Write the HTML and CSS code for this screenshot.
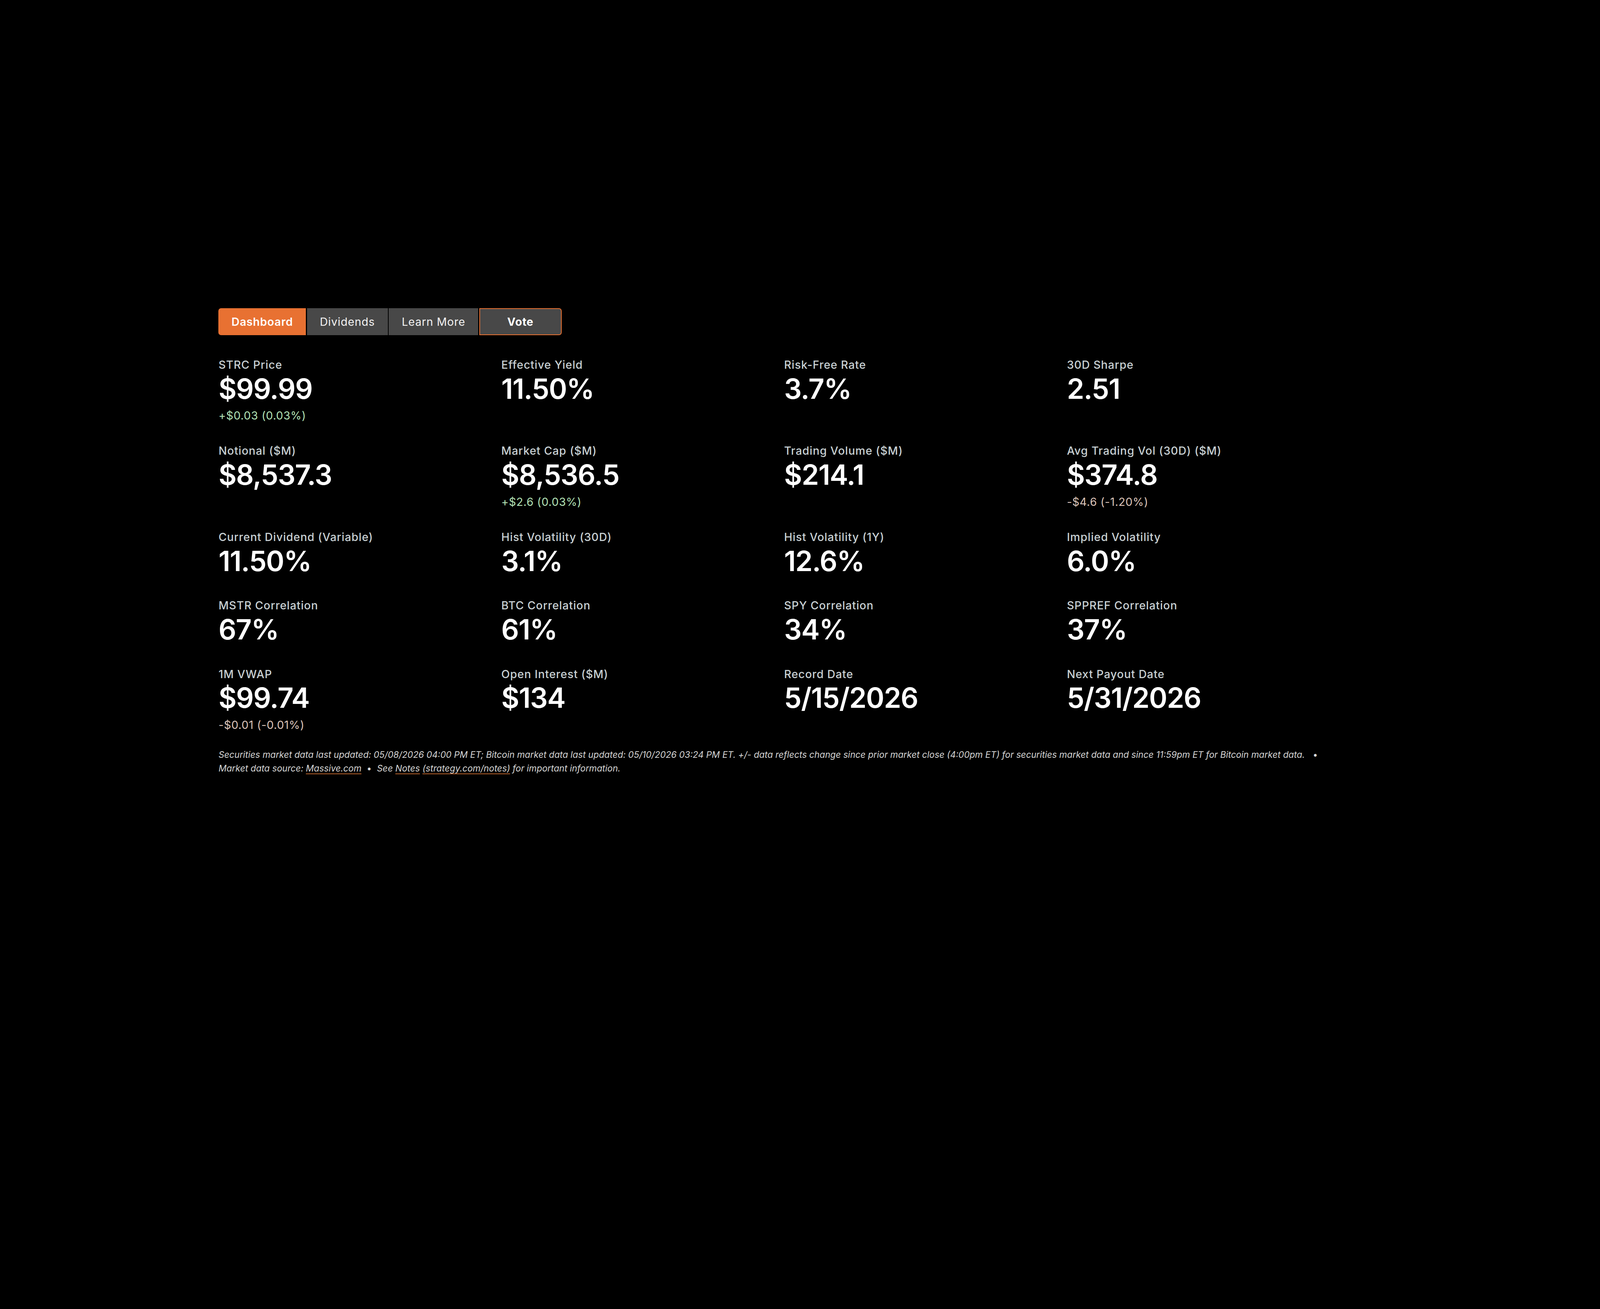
FILE: index.html
```html
<!DOCTYPE html>
<html lang="en">
<head>
<meta charset="utf-8">
<title>STRC Dashboard</title>
<link rel="stylesheet" href="styles.css">
</head>
<body>
<main class="page">
  <nav class="tabs">
    <a class="tab tab-active">Dashboard</a>
    <a class="tab">Dividends</a>
    <a class="tab">Learn More</a>
    <a class="tab tab-vote">Vote</a>
  </nav>

  <section class="stats">
    <div class="stat">
      <div class="stat-label">STRC Price</div>
      <div class="stat-value">$99.99</div>
      <div class="stat-change up">+$0.03 (0.03%)</div>
    </div>
    <div class="stat">
      <div class="stat-label">Effective Yield</div>
      <div class="stat-value">11.50%</div>
    </div>
    <div class="stat">
      <div class="stat-label">Risk-Free Rate</div>
      <div class="stat-value">3.7%</div>
    </div>
    <div class="stat">
      <div class="stat-label">30D Sharpe</div>
      <div class="stat-value">2.51</div>
    </div>

    <div class="stat">
      <div class="stat-label">Notional ($M)</div>
      <div class="stat-value">$8,537.3</div>
    </div>
    <div class="stat">
      <div class="stat-label">Market Cap ($M)</div>
      <div class="stat-value">$8,536.5</div>
      <div class="stat-change up">+$2.6 (0.03%)</div>
    </div>
    <div class="stat">
      <div class="stat-label">Trading Volume ($M)</div>
      <div class="stat-value">$214.1</div>
    </div>
    <div class="stat">
      <div class="stat-label">Avg Trading Vol (30D) ($M)</div>
      <div class="stat-value">$374.8</div>
      <div class="stat-change down">-$4.6 (-1.20%)</div>
    </div>

    <div class="stat">
      <div class="stat-label">Current Dividend (Variable)</div>
      <div class="stat-value">11.50%</div>
    </div>
    <div class="stat">
      <div class="stat-label">Hist Volatility (30D)</div>
      <div class="stat-value">3.1%</div>
    </div>
    <div class="stat">
      <div class="stat-label">Hist Volatility (1Y)</div>
      <div class="stat-value">12.6%</div>
    </div>
    <div class="stat">
      <div class="stat-label">Implied Volatility</div>
      <div class="stat-value">6.0%</div>
    </div>

    <div class="stat">
      <div class="stat-label">MSTR Correlation</div>
      <div class="stat-value">67%</div>
    </div>
    <div class="stat">
      <div class="stat-label">BTC Correlation</div>
      <div class="stat-value">61%</div>
    </div>
    <div class="stat">
      <div class="stat-label">SPY Correlation</div>
      <div class="stat-value">34%</div>
    </div>
    <div class="stat">
      <div class="stat-label">SPPREF Correlation</div>
      <div class="stat-value">37%</div>
    </div>

    <div class="stat">
      <div class="stat-label">1M VWAP</div>
      <div class="stat-value">$99.74</div>
      <div class="stat-change down">-$0.01 (-0.01%)</div>
    </div>
    <div class="stat">
      <div class="stat-label">Open Interest ($M)</div>
      <div class="stat-value">$134</div>
    </div>
    <div class="stat">
      <div class="stat-label">Record Date</div>
      <div class="stat-value">5/15/2026</div>
    </div>
    <div class="stat">
      <div class="stat-label">Next Payout Date</div>
      <div class="stat-value">5/31/2026</div>
    </div>
  </section>

  <p class="note">
    <span>Securities market data last updated: 05/08/2026 04:00 PM ET; Bitcoin market data last updated: 05/10/2026 03:24 PM ET. +/- data reflects change since prior market close (4:00pm ET) for securities market data and since 11:59pm ET for Bitcoin market data.</span>
    <span class="sep sep-wide">•</span>
    <span>Market data source: <a class="note-link">Massive.com</a></span>
    <span class="sep">•</span>
    <span>See <a class="note-link">Notes</a> <a class="note-link">(strategy.com/notes)</a> for important information.</span>
  </p>
</main>
</body>
</html>
```

FILE: styles.css
```css
html {
  zoom: 2.3704;
  background: #000;
}

body {
  margin: 0;
  min-height: 1117px;
  background: #000;
  color: #fff;
  font-family: Inter, "Noto Sans", "Liberation Sans", sans-serif;
}

.page {
  padding: 333px 0 0 236px;
}

/* Tabs */
.tabs {
  display: flex;
  gap: 1px;
  height: 29px;
}

.tab {
  display: flex;
  align-items: center;
  box-sizing: border-box;
  height: 29px;
  padding: 0 14px;
  background: #484848;
  color: #f2f2f2;
  font-size: 12px;
  letter-spacing: 0.35px;
  cursor: pointer;
}

.tab-active {
  background: #e87132;
  color: #fff;
  font-weight: 600;
  border-radius: 3px 0 0 3px;
}

.tab-vote {
  padding: 0 29.5px;
  border: 1px solid #e87132;
  border-radius: 0 3px 3px 0;
  color: #fff;
  font-weight: 700;
}

/* Stats grid */
.stats {
  display: grid;
  grid-template-columns: repeat(4, 305.4px);
  row-gap: 22px;
  margin-top: 24px;
  align-items: start;
}

.stat-label {
  font-size: 12px;
  line-height: 16px;
  font-weight: 500;
  color: #c8d0d3;
  letter-spacing: 0.4px;
}

.stat-value {
  font-size: 30px;
  line-height: 36px;
  font-weight: 600;
  letter-spacing: -0.55px;
  color: #fff;
}

.stat-change {
  margin-top: 3px;
  font-size: 12px;
  line-height: 16px;
  letter-spacing: 0.3px;
}

.stat-change.up {
  color: #b3e2b6;
}

.stat-change.down {
  color: #dcc4b9;
}

/* Footnote */
.note {
  width: 1205px;
  margin: 17px 0 0;
  font-size: 9.58px;
  line-height: 14.6px;
  font-style: italic;
  color: #d6d6d6;
}

.note-link {
  color: #d6d6d6;
  text-decoration: underline;
  text-decoration-color: #b5602a;
  text-underline-offset: 2px;
}

.sep {
  margin: 0 3px;
  font-style: normal;
}

.sep-wide {
  margin-left: 6px;
}
```
